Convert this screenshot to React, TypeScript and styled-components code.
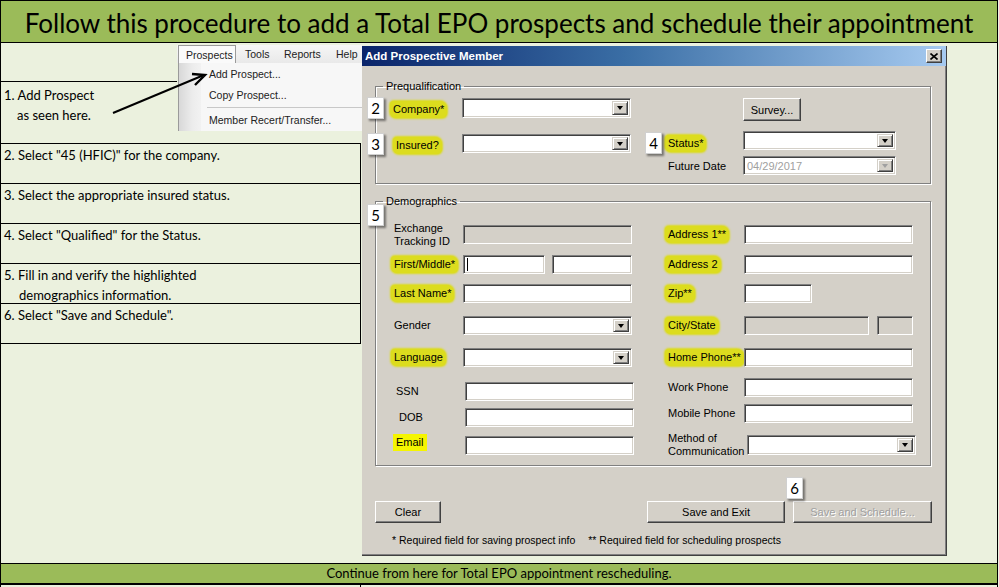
import React from 'react';
import styled, { createGlobalStyle } from 'styled-components';

const GlobalStyle = createGlobalStyle`
  html, body { margin: 0; padding: 0; background: #ebf1de; }
  * { box-sizing: border-box; }
`;

const GREEN = '#9bbb59';
const FACE = '#d4d0c8';
const MARK = '#dcdc1e';

const Page = styled.div`
  width: 998px;
  height: 587px;
  overflow: hidden;
  background: #ebf1de;
  border-left: 1px solid #000;
  border-right: 1px solid #000;
  display: flex;
  flex-direction: column;
  font-family: Lato, 'Open Sans', sans-serif;
  color: #000;
`;

const Title = styled.h1`
  margin: 0;
  flex: none;
  height: 43px;
  padding-top: 4px;
  background: ${GREEN};
  border-top: 1px solid #000;
  border-bottom: 1px solid #000;
  font: 400 26px/37px Lato, sans-serif;
  text-align: center;
  white-space: nowrap;
`;

const Middle = styled.div`
  flex: none;
  height: 520px;
  display: flex;
  align-items: flex-start;
`;

const Steps = styled.div`
  width: 361px;
  flex: none;
  display: flex;
  flex-direction: column;
`;

const TopStep = styled.div`
  position: relative;
  height: 100px;
  display: flex;
  align-items: flex-start;
`;

const FirstStep = styled.div`
  width: 176px;
  flex: none;
`;

const Spacer = styled.div`
  height: 39px;
  border-bottom: 1px solid #000;
`;

const StepText = styled.div<{ $indent?: number }>`
  font-size: 13px;
  line-height: 20px;
  padding-left: ${p => 3 + (p.$indent ?? 0)}px;
  white-space: nowrap;
`;

const StepRow = styled.div`
  width: 360px;
  height: 40px;
  border-top: 1px solid #000;
  border-right: 1px solid #000;
  padding-top: 1px;
  &:last-child {
    height: 41px;
    border-bottom: 1px solid #000;
  }
`;

const Arrow = styled.svg`
  position: absolute;
  left: 108px;
  top: 25px;
  overflow: visible;
`;

/* ---------- menu screenshot ---------- */

const MenuShot = styled.div`
  width: 185px;
  height: 86px;
  margin-top: 2px;
  display: flex;
  flex-direction: column;
  font: 10.5px 'Liberation Sans', Arial, sans-serif;
  color: #222;
  overflow: hidden;
`;

const MenuBar = styled.div`
  height: 19px;
  display: flex;
  align-items: stretch;
  background: linear-gradient(#f6f6f6, #e9e9e9);
`;

const MenuTop = styled.div<{ $open?: boolean; $w: number }>`
  width: ${p => p.$w}px;
  flex: none;
  display: flex;
  align-items: center;
  padding-left: ${p => (p.$open ? 7 : 9)}px;
  margin-left: ${p => (p.$open ? 1 : 0)}px;
  background: ${p => (p.$open ? '#fafafa' : 'transparent')};
  border: ${p => (p.$open ? '1px solid #9a9a9a' : 'none')};
  border-bottom: none;
`;

const DropDown = styled.div`
  flex: 1;
  display: flex;
  margin-left: 1px;
  border-left: 1px solid #9a9a9a;
  background: #f7f7f7;
`;

const Gutter = styled.div`
  width: 22px;
  flex: none;
  background: linear-gradient(90deg, #d8d8d8, #ececec 60%, #f2f2f2);
`;

const MenuItems = styled.div`
  flex: 1;
  padding-top: 1px;
`;

const MenuItem = styled.div`
  height: 21px;
  line-height: 21px;
  padding-left: 8px;
  white-space: nowrap;
`;

const MenuSep = styled.div`
  height: 3px;
  margin-left: 6px;
  border-top: 1px solid #c8c8c8;
  margin-top: 1px;
`;

/* ---------- dialog ---------- */

const Dialog = styled.div`
  width: 585px;
  height: 510px;
  margin-top: 3px;
  flex: none;
  background: ${FACE};
  border-right: 1px solid #404040;
  border-bottom: 1px solid #404040;
  box-shadow: inset -1px -1px 0 #808080;
  font: 11px 'Liberation Sans', Arial, sans-serif;
  color: #000;
  display: flex;
  flex-direction: column;
`;

const TitleBar = styled.div`
  height: 20px;
  flex: none;
  display: flex;
  align-items: center;
  justify-content: space-between;
  padding: 0 4px 0 3px;
  background: linear-gradient(90deg, #0a246a, #3a6ea5 45%, #a6caf0);
  color: #fff;
  font-weight: 700;
  font-size: 11.5px;
`;

const CloseBtn = styled.div`
  width: 16px;
  height: 14px;
  background: ${FACE};
  border: 1px solid;
  border-color: #fff #404040 #404040 #fff;
  box-shadow: inset -1px -1px 0 #808080;
  display: flex;
  align-items: center;
  justify-content: center;
`;

const Body = styled.div`
  flex: 1;
  padding: 14px 15px 0 13px;
  display: flex;
  flex-direction: column;
`;

const Group = styled.fieldset<{ $h: number; $pt: number }>`
  position: relative;
  margin: 0;
  min-width: 0;
  height: ${p => p.$h}px;
  padding: ${p => p.$pt}px 0 0 0;
  border: 1px solid #808080;
  box-shadow: 1px 1px 0 #fff, inset 1px 1px 0 #fff;
`;

const Legend = styled.legend`
  margin-left: 7px;
  padding: 0 3px;
  font-size: 11px;
  line-height: 13px;
`;

const Badge = styled.div<{ $x?: number; $y?: number; $float?: boolean }>`
  position: ${p => (p.$float ? 'absolute' : 'static')};
  left: ${p => p.$x ?? 0}px;
  top: ${p => p.$y ?? 0}px;
  width: 17px;
  height: 22px;
  flex: none;
  background: #fff;
  border: 1px solid #d0d0d0;
  box-shadow: 2px 2px 2px rgba(0, 0, 0, 0.45);
  font: 15px/20px Lato, sans-serif;
  text-align: center;
  color: #000;
  z-index: 2;
`;

const PreGrid = styled.div`
  position: relative;
  display: grid;
  grid-template-columns: 86px 169px 37px 75px 153px;
  grid-template-rows: 33px 25px 19px;
`;

const Cell = styled.div<{ $mt?: number; $ml?: number; $pl?: number; $h?: number }>`
  display: flex;
  align-items: center;
  align-self: start;
  height: ${p => p.$h ?? 20}px;
  margin-top: ${p => p.$mt ?? 0}px;
  margin-left: ${p => p.$ml ?? 0}px;
  padding-left: ${p => p.$pl ?? 0}px;
  white-space: nowrap;
`;

const Mark = styled.span<{ $flat?: boolean }>`
  display: inline-block;
  padding: 2px 3px;
  margin-left: -3px;
  line-height: 13px;
  background: ${p => (p.$flat ? '#f5f500' : MARK)};
  border-radius: ${p => (p.$flat ? '0' : '4px 7px 5px 6px')};
  box-shadow: ${p => (p.$flat ? 'none' : `0 0 2px 1px ${MARK}`)};
`;

const Field = styled.div<{ $w: number; $h?: number; $off?: boolean; $ml?: number }>`
  position: relative;
  width: ${p => p.$w}px;
  height: ${p => p.$h ?? 19}px;
  margin-left: ${p => p.$ml ?? 0}px;
  flex: none;
  background: ${p => (p.$off ? FACE : '#fff')};
  border: 1px solid;
  border-color: #808080 #fff #fff #808080;
  box-shadow: inset 1px 1px 0 #404040, inset -1px -1px 0 ${FACE};
  display: flex;
  align-items: center;
  justify-content: space-between;
  padding: 2px 2px 2px 3px;
  color: #a0a0a0;
`;

const DropBtn = styled.div<{ $off?: boolean }>`
  width: 16px;
  height: 100%;
  flex: none;
  background: ${FACE};
  border: 1px solid;
  border-color: ${FACE} #404040 #404040 ${FACE};
  box-shadow: inset 1px 1px 0 #fff, inset -1px -1px 0 #808080;
  display: flex;
  align-items: center;
  justify-content: center;
  &::after {
    content: '';
    width: 0;
    height: 0;
    border-left: 3.5px solid transparent;
    border-right: 3.5px solid transparent;
    border-top: 4px solid ${p => (p.$off ? '#a0a0a0' : '#000')};
  }
`;

const Caret = styled.span`
  width: 1px;
  height: 13px;
  background: #000;
`;

const DemoGrid = styled.div`
  display: grid;
  grid-template-columns: 292px 1fr;
`;

const Column = styled.div`
  display: flex;
  flex-direction: column;
`;

const Row = styled.div<{ $h: number }>`
  height: ${p => p.$h}px;
  display: flex;
  align-items: flex-start;
`;

const Label = styled.div<{ $w: number; $pl?: number; $h?: number }>`
  width: ${p => p.$w}px;
  height: ${p => p.$h ?? 19}px;
  flex: none;
  padding-left: ${p => p.$pl ?? 0}px;
  display: flex;
  align-items: center;
  line-height: 13px;
  white-space: nowrap;
`;

const Buttons = styled.div`
  position: relative;
  display: flex;
  margin-top: 35px;
`;

const WinButton = styled.div<{ $w: number; $h?: number; $off?: boolean; $ml?: number }>`
  width: ${p => p.$w}px;
  height: ${p => p.$h ?? 22}px;
  margin-left: ${p => p.$ml ?? 0}px;
  flex: none;
  background: ${FACE};
  border: 1px solid;
  border-color: #fff #404040 #404040 #fff;
  box-shadow: inset -1px -1px 0 #808080;
  display: flex;
  align-items: center;
  justify-content: center;
  white-space: nowrap;
  color: ${p => (p.$off ? '#a0a0a0' : '#000')};
  text-shadow: ${p => (p.$off ? '1px 1px 0 #fff' : 'none')};
`;

const Note = styled.div`
  margin-top: 11px;
  padding-left: 17px;
  font-size: 10.5px;
  line-height: 13px;
  white-space: nowrap;
  span + span {
    margin-left: 13px;
  }
`;

/* ---------- bottom ---------- */

const BottomBar = styled.div`
  flex: none;
  height: 22px;
  background: ${GREEN};
  border-top: 1px solid #000;
  border-bottom: 2px solid #000;
  font-size: 13px;
  line-height: 19px;
  text-align: center;
`;

const Tail = styled.div`
  flex: none;
  width: 360px;
  height: 2px;
  border-right: 1px solid #000;
`;

type ComboProps = { w: number; h?: number; off?: boolean; value?: string; ml?: number };

const Combo = ({ w, h = 20, off, value, ml }: ComboProps) => (
  <Field $w={w} $h={h} $off={off} $ml={ml} style={{ background: '#fff' }}>
    <span>{value}</span>
    <DropBtn $off={off} />
  </Field>
);

const Prequalification = () => (
  <Group $h={104} $pt={5}>
    <Legend>Prequalification</Legend>
    <PreGrid>
      <Badge $float $x={-9} $y={-1}>2</Badge>
      <Badge $float $x={-9} $y={35}>3</Badge>
      <Cell $pl={17} $mt={1}><Mark>Company*</Mark></Cell>
      <Cell><Combo w={169} /></Cell>
      <div />
      <div />
      <Cell $h={23}><WinButton $w={58} $h={23}>Survey...</WinButton></Cell>

      <Cell $pl={20} $mt={4}><Mark>Insured?</Mark></Cell>
      <Cell $mt={3} $h={19}><Combo w={169} h={19} /></Cell>
      <Cell $h={22} $mt={1}><Badge style={{ marginLeft: 14 }}>4</Badge></Cell>
      <Cell $mt={2}><Mark>Status*</Mark></Cell>
      <Cell $h={19}><Combo w={153} h={19} /></Cell>

      <div />
      <div />
      <div />
      <Cell $h={19}>Future Date</Cell>
      <Cell $h={19}><Combo w={153} h={19} off value="04/29/2017" /></Cell>
    </PreGrid>
  </Group>
);

const Demographics = () => (
  <Group $h={271} $pt={17} style={{ marginTop: 11 }}>
    <Legend>Demographics</Legend>
    <Badge $float $x={-9} $y={-4}>5</Badge>
    <DemoGrid>
      <Column>
        <Row $h={30}>
          <Label $w={87} $pl={18}>Exchange<br />Tracking ID</Label>
          <Field $w={169} $off />
        </Row>
        <Row $h={29}>
          <Label $w={87} $pl={18}><Mark>First/Middle*</Mark></Label>
          <Field $w={82} style={{ justifyContent: 'flex-start' }}><Caret /></Field>
          <Field $w={80} $ml={7} />
        </Row>
        <Row $h={32}>
          <Label $w={87} $pl={18}><Mark>Last Name*</Mark></Label>
          <Field $w={169} />
        </Row>
        <Row $h={32}>
          <Label $w={87} $pl={18}>Gender</Label>
          <Combo w={169} h={19} />
        </Row>
        <Row $h={34}>
          <Label $w={87} $pl={18}><Mark>Language</Mark></Label>
          <Combo w={169} h={19} />
        </Row>
        <Row $h={26}>
          <Label $w={89} $pl={20}>SSN</Label>
          <Field $w={169} />
        </Row>
        <Row $h={28}>
          <Label $w={89} $pl={23}>DOB</Label>
          <Field $w={169} />
        </Row>
        <Row $h={19}>
          <Label $w={89} $pl={20} style={{ marginTop: -3 }}><Mark $flat>Email</Mark></Label>
          <Field $w={169} />
        </Row>
      </Column>
      <Column>
        <Row $h={30}>
          <Label $w={76}><Mark>Address 1**</Mark></Label>
          <Field $w={169} />
        </Row>
        <Row $h={29}>
          <Label $w={76}><Mark>Address 2</Mark></Label>
          <Field $w={169} />
        </Row>
        <Row $h={32}>
          <Label $w={76}><Mark>Zip**</Mark></Label>
          <Field $w={68} />
        </Row>
        <Row $h={32}>
          <Label $w={76}><Mark>City/State</Mark></Label>
          <Field $w={125} $off />
          <Field $w={36} $ml={8} $off />
        </Row>
        <Row $h={30}>
          <Label $w={76}><Mark>Home Phone**</Mark></Label>
          <Field $w={169} />
        </Row>
        <Row $h={26}>
          <Label $w={76}>Work Phone</Label>
          <Field $w={169} />
        </Row>
        <Row $h={31}>
          <Label $w={76}>Mobile Phone</Label>
          <Field $w={169} />
        </Row>
        <Row $h={20}>
          <Label $w={79} $h={20}>Method of<br />Communication</Label>
          <Combo w={169} h={20} />
        </Row>
      </Column>
    </DemoGrid>
  </Group>
);

const AddProspectDialog = () => (
  <Dialog>
    <TitleBar>
      <span>Add Prospective Member</span>
      <CloseBtn>
        <svg width="8" height="7" viewBox="0 0 8 7">
          <path d="M0.5 0.5 L7.5 6.5 M7.5 0.5 L0.5 6.5" stroke="#000" strokeWidth="1.6" />
        </svg>
      </CloseBtn>
    </TitleBar>
    <Body>
      <Prequalification />
      <Demographics />
      <Buttons>
        <WinButton $w={66}>Clear</WinButton>
        <WinButton $w={138} $ml={206}>Save and Exit</WinButton>
        <WinButton $w={139} $ml={8} $off>Save and Schedule...</WinButton>
        <Badge $float $x={411} $y={-24}>6</Badge>
      </Buttons>
      <Note>
        <span>* Required field for saving prospect info</span>
        <span>** Required field for scheduling prospects</span>
      </Note>
    </Body>
  </Dialog>
);

const steps = [
  ['2. Select "45 (HFIC)" for the company.'],
  ['3. Select the appropriate insured status.'],
  ['4. Select "Qualified" for the Status.'],
  ['5. Fill in and verify the highlighted', 'demographics information.'],
  ['6. Select "Save and Schedule".'],
];

export default function App() {
  return (
    <>
      <GlobalStyle />
      <Page>
        <Title>Follow this procedure to add a Total EPO prospects and schedule their appointment</Title>
        <Middle>
          <Steps>
            <TopStep>
              <FirstStep>
                <Spacer />
                <StepText style={{ marginTop: 3 }}>1. Add Prospect</StepText>
                <StepText $indent={13}>as seen here.</StepText>
              </FirstStep>
              <MenuShot>
                <MenuBar>
                  <MenuTop $open $w={58}>Prospects</MenuTop>
                  <MenuTop $w={39}>Tools</MenuTop>
                  <MenuTop $w={52}>Reports</MenuTop>
                  <MenuTop $w={35}>Help</MenuTop>
                </MenuBar>
                <DropDown>
                  <Gutter />
                  <MenuItems>
                    <MenuItem>Add Prospect...</MenuItem>
                    <MenuItem>Copy Prospect...</MenuItem>
                    <MenuSep />
                    <MenuItem>Member Recert/Transfer...</MenuItem>
                  </MenuItems>
                </DropDown>
              </MenuShot>
              <Arrow width="104" height="52" viewBox="0 0 104 52">
                <path d="M4 45 L95 7" stroke="#000" strokeWidth="2" fill="none" />
                <path d="M86 17 L96 7 L83 6" stroke="#000" strokeWidth="2.4" fill="none" strokeLinejoin="miter" />
              </Arrow>
            </TopStep>
            {steps.map((s, i) => (
              <StepRow key={i}>
                {s.map((line, j) => (
                  <StepText key={j} $indent={j ? 15 : 0}>{line}</StepText>
                ))}
              </StepRow>
            ))}
          </Steps>
          <AddProspectDialog />
        </Middle>
        <BottomBar>Continue from here for Total EPO appointment rescheduling.</BottomBar>
        <Tail />
      </Page>
    </>
  );
}
